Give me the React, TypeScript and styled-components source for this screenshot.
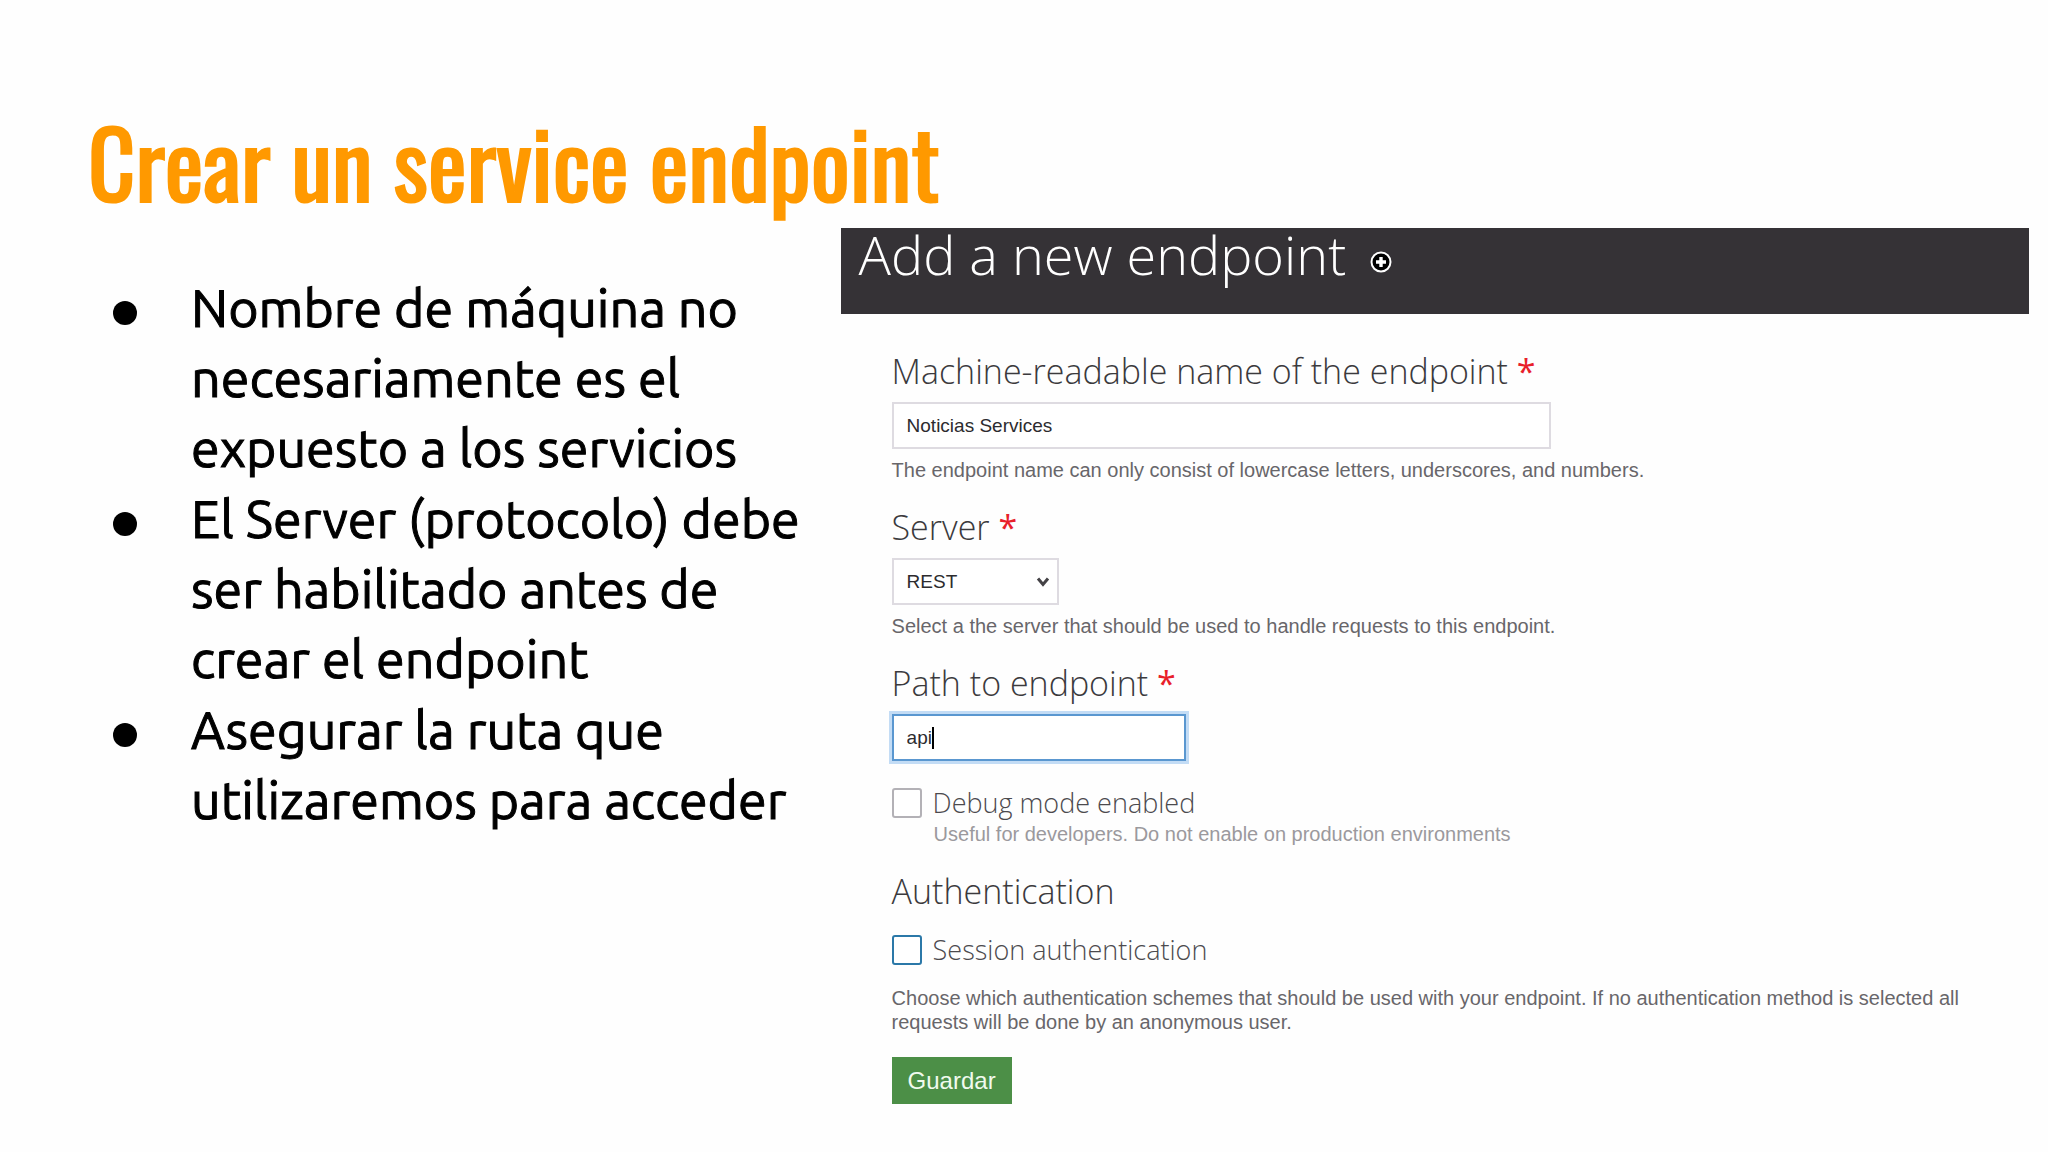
import React from "react";
import styled, { createGlobalStyle } from "styled-components";

const GlobalStyle = createGlobalStyle`
  *, *::before, *::after { box-sizing: border-box; }
  body { margin: 0; background: #fefefe; }
`;

const heading = `"Open Sans", "Noto Sans", sans-serif`;
const plain = `"Liberation Sans", Arial, sans-serif`;

const Slide = styled.main`
  min-height: 100vh;
  padding: 97px 19px 22px 88px;
`;

const Title = styled.h1`
  margin: 0 0 3px;
  color: #ff9900;
  font-family: Oswald, "Roboto Condensed", "Liberation Sans Narrow", sans-serif;
  font-size: 92px;
  font-weight: 400;
  line-height: 128px;
  -webkit-text-stroke: 2px #ff9900;
`;

const Columns = styled.div`
  display: grid;
  grid-template-columns: minmax(0, 12fr) minmax(0, 19fr);
  padding-left: 2px;
`;

const Points = styled.ul`
  display: flex;
  flex-direction: column;
  gap: 1px;
  margin: 0;
  padding: 45px 20px 0 23px;
  list-style: none;
`;

const Point = styled.li`
  display: flex;
  gap: 54px;
  color: #000;
  font-family: Ubuntu, "Noto Sans", sans-serif;
  font-size: 52px;
  font-weight: 400;
  line-height: 70px;
  -webkit-text-stroke: 1px #000;

  &::before {
    content: "";
    flex: none;
    width: 24px;
    height: 24px;
    margin-top: 28px;
    border-radius: 50%;
    background: #000;
  }
`;

const PointLine = styled.span`
  display: block;
  white-space: nowrap;
`;

const Panel = styled.section`
  color: #3b3a3d;
`;

const PanelHeader = styled.header`
  display: flex;
  align-items: flex-start;
  gap: 24px;
  height: 86px;
  padding: 0 18px;
  background: #353236;
`;

const PanelTitle = styled.h2`
  margin: 0;
  color: #fff;
  font-family: ${heading};
  font-size: 54px;
  font-weight: 300;
  line-height: 52px;
`;

const PlusIcon = styled.svg`
  width: 22px;
  height: 22px;
  margin-top: 23px;
`;

const Form = styled.form`
  display: flex;
  flex-direction: column;
  align-items: flex-start;
  gap: 23px;
  padding: 35px 51px 18px;
`;

const Field = styled.div`
  display: flex;
  flex-direction: column;
  align-items: flex-start;
  gap: 9px;
  width: 100%;
`;

const Label = styled.label`
  font-family: ${heading};
  font-size: 34px;
  font-weight: 300;
  line-height: 44px;
`;

const Required = styled.span`
  color: #e8202a;
  font-weight: 400;
`;

const Box = styled.div<{ $width: number; $focused?: boolean }>`
  display: flex;
  align-items: center;
  width: ${(p) => p.$width}px;
  max-width: 100%;
  height: 47px;
  padding: 0 13px;
  background: #fff;
  border: ${(p) => (p.$focused ? "2px solid #5a97d0" : "2px solid #dedbe1")};
  box-shadow: ${(p) => (p.$focused ? "0 0 0 3px #c3dcf5" : "none")};
`;

const TextInput = styled.input<{ $grow?: boolean }>`
  flex: ${(p) => (p.$grow ? "1" : "none")};
  field-sizing: ${(p) => (p.$grow ? "fixed" : "content")};
  min-width: 0;
  padding: 0;
  border: 0;
  outline: 0;
  background: transparent;
  color: #2c2b2e;
  font-family: ${plain};
  font-size: 19px;
  line-height: 24px;
`;

const Caret = styled.span`
  width: 2px;
  height: 22px;
  background: #000;
`;

const Select = styled.select`
  flex: 1;
  padding: 0;
  border: 0;
  outline: 0;
  appearance: none;
  background: transparent;
  color: #2c2b2e;
  font-family: ${plain};
  font-size: 19px;
  line-height: 24px;
`;

const Chevron = styled.svg`
  flex: none;
  width: 14px;
  height: 12px;
  margin-right: -6px;
  pointer-events: none;
`;

const Help = styled.p<{ $muted?: boolean }>`
  margin: 0;
  padding-left: ${(p) => (p.$muted ? "42px" : "0")};
  color: ${(p) => (p.$muted ? "#9b999d" : "#68666a")};
  font-family: ${plain};
  font-size: 20px;
  line-height: 24px;
`;

const CheckRow = styled.label`
  display: flex;
  align-items: center;
  gap: 11px;
  color: #4c4a4e;
  font-family: ${heading};
  font-size: 27px;
  font-weight: 300;
  line-height: 38px;
`;

const Checkbox = styled.input<{ $active?: boolean }>`
  appearance: none;
  flex: none;
  width: 30px;
  height: 30px;
  margin: 0;
  border: 2px solid ${(p) => (p.$active ? "#2b78a8" : "#b3b1b6")};
  border-radius: 3px;
  background: #fff;
`;

const Group = styled.fieldset`
  display: flex;
  flex-direction: column;
  gap: 17px;
  min-width: 0;
  margin: 0;
  padding: 0;
  border: 0;
`;

const Legend = styled.legend`
  padding: 0 0 18px;
  font-family: ${heading};
  font-size: 34px;
  font-weight: 300;
  line-height: 44px;
`;

const SaveButton = styled.button`
  height: 47px;
  padding: 0 16px;
  border: 0;
  background: #4c8f47;
  color: #f0faee;
  font-family: ${plain};
  font-size: 24px;
`;

const points = [
  ["Nombre de máquina no", "necesariamente es el", "expuesto a los servicios"],
  ["El Server (protocolo) debe", "ser habilitado antes de", "crear el endpoint"],
  ["Asegurar la ruta que", "utilizaremos para acceder"],
];

export default function App() {
  return (
    <Slide>
      <GlobalStyle />
      <Title>Crear un service endpoint</Title>
      <Columns>
        <Points>
          {points.map((lines) => (
            <Point key={lines[0]}>
              <div>
                {lines.map((line) => (
                  <PointLine key={line}>{line}</PointLine>
                ))}
              </div>
            </Point>
          ))}
        </Points>
        <Panel>
          <PanelHeader>
            <PanelTitle>Add a new endpoint</PanelTitle>
            <PlusIcon viewBox="0 0 22 22" aria-hidden="true">
              <circle cx="11" cy="11" r="9.5" fill="#000" stroke="#fff" strokeWidth="2" />
              <path d="M11 6v10M6 11h10" stroke="#fff" strokeWidth="3.4" />
            </PlusIcon>
          </PanelHeader>
          <Form onSubmit={(e) => e.preventDefault()}>
            <Field>
              <Label htmlFor="name">
                Machine-readable name of the endpoint <Required>*</Required>
              </Label>
              <Box $width={659}>
                <TextInput id="name" $grow defaultValue="Noticias Services" />
              </Box>
              <Help>
                The endpoint name can only consist of lowercase letters, underscores, and numbers.
              </Help>
            </Field>
            <Field>
              <Label htmlFor="server">
                Server <Required>*</Required>
              </Label>
              <Box $width={167}>
                <Select id="server" defaultValue="REST">
                  <option>REST</option>
                </Select>
                <Chevron viewBox="0 0 14 12" aria-hidden="true">
                  <path d="M2 2.5l5 6 5-6" fill="none" stroke="#444246" strokeWidth="3" />
                </Chevron>
              </Box>
              <Help>Select a the server that should be used to handle requests to this endpoint.</Help>
            </Field>
            <Field>
              <Label htmlFor="path">
                Path to endpoint <Required>*</Required>
              </Label>
              <Box $width={294} $focused>
                <TextInput id="path" defaultValue="api" />
                <Caret />
              </Box>
            </Field>
            <div>
              <CheckRow>
                <Checkbox type="checkbox" />
                Debug mode enabled
              </CheckRow>
              <Help $muted>Useful for developers. Do not enable on production environments</Help>
            </div>
            <Group>
              <Legend>Authentication</Legend>
              <CheckRow>
                <Checkbox type="checkbox" $active />
                Session authentication
              </CheckRow>
              <Help>
                Choose which authentication schemes that should be used with your endpoint. If no
                authentication method is selected all requests will be done by an anonymous user.
              </Help>
            </Group>
            <SaveButton type="submit">Guardar</SaveButton>
          </Form>
        </Panel>
      </Columns>
    </Slide>
  );
}
